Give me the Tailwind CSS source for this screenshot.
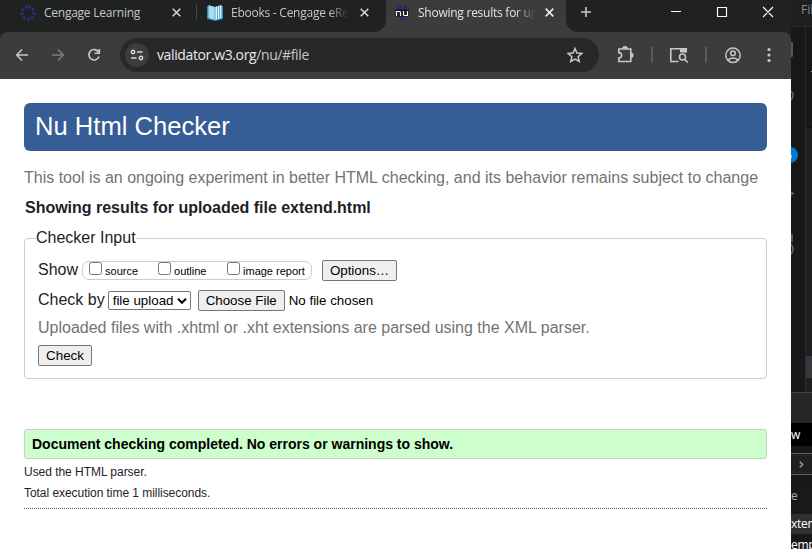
<!DOCTYPE html>
<html lang="en">
<head>
<meta charset="utf-8">
<title>Nu Html Checker</title>
<script src="https://cdn.jsdelivr.net/npm/@tailwindcss/browser@4"></script>
</head>
<body class="flex h-[549px] w-[812px] overflow-hidden bg-[#181818]">
<div class="flex w-[791px] shrink-0 flex-col bg-[#3c3c3c]">
  <header class="flex h-8 shrink-0 bg-[#1f2221] font-['Open_Sans',sans-serif] text-[12px] tracking-[-0.25px] text-[#c5c7c6]">
    <div class="flex h-[25px] w-[196px] items-center pl-[20px]">
      <svg class="h-4 w-4 shrink-0" viewBox="0 0 16 16" fill="none" stroke="#2b2d83" stroke-width="2.4"><path d="M9.500 .5L9 3.500M14 3.200l-2.500 2M15.800 9l-3-.8M13.500 14l-2-2.500M8.500 15.800v-3M3 14l2-2.300M.3 9.300l3-.8M1.500 3.800l2.700 1.700M5.500 .5l1 2.800"/></svg>
      <span class="ml-2 w-[125px] whitespace-nowrap">Cengage Learning</span>
      <svg class="ml-[3px] h-[9px] w-[9px] shrink-0" viewBox="0 0 9 9" stroke="#d6d8d7" stroke-width="1.500"><path d="M.7.7l7.600 7.600M8.300.7L.7 8.300"/></svg>
    </div>
    <div class="mt-1 h-4 w-px bg-[#484a49]"></div>
    <div class="flex h-[25px] w-[189px] items-center pl-[10px]">
      <svg class="h-4 w-4 shrink-0" viewBox="0 0 16 16"><path d="M0 1l8 1 8-1v13l-8 2-8-2z" fill="#2a8bbd"/><path d="M1.500 0L8 2v13l-6.500-2z" fill="#a9dcf2"/><path d="M8 2l6.500-2v13L8 15z" fill="#eaf6fb"/><path d="M8 2v13M10.500 1.500v12.500M12.700 1v12" stroke="#49a9d3"/></svg>
      <span class="ml-2 w-[117px] shrink-0 overflow-hidden whitespace-nowrap [mask-image:linear-gradient(to_right,black_84%,transparent)]">Ebooks - Cengage eRe</span>
      <svg class="ml-[12px] h-[9px] w-[9px] shrink-0" viewBox="0 0 9 9" stroke="#d6d8d7" stroke-width="1.500"><path d="M.7.7l7.600 7.600M8.300.7L.7 8.300"/></svg>
    </div>
    <div class="relative flex h-8 w-[180px] bg-[#3c3c3c] pb-[7px] text-[#e3e3e3]">
      <svg class="absolute bottom-0 -left-3 h-3 w-3" viewBox="0 0 12 12"><path d="M12 0v12H0A12 12 0 0012 0" fill="#3c3c3c"/></svg>
      <svg class="absolute bottom-0 -right-3 h-3 w-3" viewBox="0 0 12 12"><path d="M0 0v12h12A12 12 0 010 0" fill="#3c3c3c"/></svg>
      <div class="flex items-center pl-[8px]">
        <svg class="h-4 w-4 shrink-0" viewBox="0 0 16 16"><path d="M3 0h3l2 4 2-4h3l-1 9-3 6H7L4 9z" fill="#29296f"/><path d="M1 4.500h14v7H1z" fill="#17171f"/><path d="M2.500 11V6.500h3q1 0 1 1V11M9.500 6v3.500q0 1 1 1h3V6" fill="none" stroke="#fff" stroke-width="1.200"/></svg>
        <span class="ml-[8px] w-[117px] shrink-0 overflow-hidden whitespace-nowrap [mask-image:linear-gradient(to_right,black_84%,transparent)]">Showing results for up</span>
        <svg class="ml-[10px] h-[9px] w-[9px] shrink-0" viewBox="0 0 9 9" stroke="#e6e6e6" stroke-width="1.700"><path d="M.7.7l7.600 7.600M8.300.7L.7 8.300"/></svg>
      </div>
    </div>
    <svg class="h-6 w-[225px]" viewBox="0 0 225 24" fill="none" stroke="#fff"><path d="M15 12h10M20 7v10" stroke="#c7c7c7" stroke-width="1.600"/><path d="M105 11.500h10M151.500 7.500h9v9h-9zM197 7l10 10M207 7l-10 10" stroke-width="1.100"/></svg>
  </header>
  <div class="h-[47px] shrink-0 bg-[#1f2221]">
    <nav class="flex h-[47px] items-center rounded-t-[8px] bg-[#3c3c3c] pb-[1px] font-['Open_Sans',sans-serif]">
      <svg class="h-[34px] w-[120px]" viewBox="0 0 120 34" fill="none" stroke="#c7c7c7" stroke-width="1.600"><path d="M28 17H17M22 11.500L16.700 17l5.300 5.500"/><path d="M52 17h11M58 11.500l5.300 5.500-5.300 5.500" stroke="#7b7b7b"/><path d="M98.500 14A5.200 5.200 0 1099 18.500M99.300 11v4.200h-4.600"/></svg>
      <div class="flex h-[34px] w-[479px] items-center rounded-full bg-[#282828] pl-[5px]">
        <div class="flex h-6 w-6 items-center justify-center rounded-full bg-[#3c3c3c]"><svg class="h-4 w-4" viewBox="0 0 16 16" fill="none" stroke="#d5d5d5" stroke-width="1.500"><circle cx="4" cy="5" r="1.700"/><path d="M8 5h5.500M2 11h5.500"/><circle cx="12" cy="11" r="1.700"/></svg></div>
        <div class="ml-[8px] flex-1 text-[14px] leading-5 tracking-[-0.38px] text-[#e8eaed]">validator.w3.org<span class="text-[#c7c7c7]">/nu/#file</span></div>
        <svg class="mr-[16px] h-4 w-4" viewBox="0 0 16 16" fill="none" stroke="#c7c7c7" stroke-width="1.500"><path d="M8 1.500l1.900 4.600 4.900.4-3.700 3.200 1.100 4.800L8 12l-4.200 2.500 1.100-4.800L1.200 6.500l4.900-.4z"/></svg>
      </div>
      <svg class="h-[34px] w-[192px]" viewBox="0 0 192 34" fill="none" stroke="#c7c7c7" stroke-width="1.600"><path d="M19.800 11h12v12.500h-12V20c2 0 2.800-1 2.800-2.700s-.8-2.700-2.800-2.700z"/><path d="M24 10.500a2 1.700 0 014 0M32 15.200a1.700 2 0 010 4" fill="#c7c7c7"/><path d="M53 9v15.500M107 9v15.500" stroke="#646464" stroke-width="1.500"/><path d="M79.500 23.500h-7.700v-12.700h15.200v3.400"/><path d="M81 10h7v4.500h-7z" fill="#c7c7c7" stroke="none"/><circle cx="83.500" cy="19" r="3"/><path d="M85.800 21.500l3 3"/><circle cx="134" cy="17.300" r="7.200" stroke-width="1.500"/><circle cx="134" cy="15.300" r="2.300" stroke-width="1.500"/><path d="M129.300 22.300c1.500-3 7.900-3 9.400 0"/><g fill="#c7c7c7" stroke="none"><circle cx="170" cy="11.500" r="1.600"/><circle cx="170" cy="17" r="1.600"/><circle cx="170" cy="22.500" r="1.600"/></g></svg>
    </nav>
  </div>
  <main class="flex-1 bg-white px-6 pt-6 font-['Liberation_Sans',sans-serif] text-[16px] text-[#1f2126]">
    <h1 class="flex h-12 items-center rounded-[6px] bg-[#365d95] pb-[2px] pl-[11px] text-[25.600px] text-white">Nu Html Checker</h1>
    <p class="mt-[16px] leading-[22px] whitespace-nowrap text-[#737373]">This tool is an ongoing experiment in better HTML checking, and its behavior remains subject to change</p>
    <h2 class="mt-2 pl-px leading-[22px] font-bold tracking-[-0.02px]">Showing results for uploaded file extend.html</h2>
    <fieldset class="mt-[9px] h-[151px] rounded-[4px] border border-[#ccc] pl-[13px]">
      <legend class="-ml-[2px] h-[20px] leading-[20px]">Checker Input</legend>
      <div class="mt-[11px] flex h-[22px] items-center">
        <span>Show</span>
        <div class="ml-[4px] flex h-[19px] w-[230px] items-center rounded-[7px] border border-[#ccc] pl-[6px] text-[11px] text-black">
          <label class="flex w-[69px] items-center whitespace-nowrap"><input type="checkbox" class="mb-[4px] h-[13px] w-[13px] shrink-0"><span class="ml-[3px] pt-[2px]">source</span></label>
          <label class="flex w-[69px] items-center whitespace-nowrap"><input type="checkbox" class="mb-[4px] h-[13px] w-[13px] shrink-0"><span class="ml-[3px] pt-[2px]">outline</span></label>
          <label class="flex items-center whitespace-nowrap"><input type="checkbox" class="mb-[4px] h-[13px] w-[13px] shrink-0"><span class="ml-[3px] pt-[2px]">image report</span></label>
        </div>
        <button class="ml-[10px] h-[21px] w-[75px] rounded-[2px] border border-[#767676] bg-[#efefef] text-[13.333px] leading-[19px] text-black">Options…</button>
      </div>
      <div class="mt-[8px] flex h-[22px] items-center text-[13.333px] text-black">
        <span class="text-[16px] text-[#1f2126]">Check by</span>
        <div class="ml-[3px] flex h-[19px] w-[83px] items-center rounded-[2px] border border-[#767676] bg-white pt-px pl-[4px] whitespace-nowrap">file upload<svg class="ml-[4px] h-[6px] w-[10px]" viewBox="0 0 10 6" fill="none" stroke="#000" stroke-width="2"><path d="M1 .8l4 4 4-4"/></svg></div>
        <button class="ml-[7px] h-[21px] w-[87px] rounded-[2px] border border-[#767676] bg-[#efefef] leading-[19px]">Choose File</button>
        <span class="ml-[4px] pt-px">No file chosen</span>
      </div>
      <p class="mt-[6px] leading-[22px] text-[#737373]">Uploaded files with .xhtml or .xht extensions are parsed using the XML parser.</p>
      <button class="mt-[6px] block h-[21px] w-[54px] rounded-[2px] border border-[#767676] bg-[#efefef] text-[13.333px] leading-[19px] text-black">Check</button>
    </fieldset>
    <p class="mt-[50px] flex h-[30px] items-center rounded-[3px] border border-[#ccc] bg-[#cfc] pl-[7px] text-[14px] font-bold text-black">Document checking completed. No errors or warnings to show.</p>
    <p class="mt-[5px] text-[12px] leading-4 tracking-[-0.04px]">Used the HTML parser.</p>
    <p class="mt-[5px] text-[12px] leading-4 tracking-[-0.05px]">Total execution time 1 milliseconds.</p>
    <div class="mt-[7px] border-t border-dotted border-[#555]"></div>
  </main>
</div>
<aside class="flex w-[21px] flex-col overflow-hidden bg-[#181818] font-['Open_Sans',sans-serif] text-[12px] whitespace-nowrap text-[#ccc]">
  <div class="h-[27px] shrink-0 border-b border-[#2b2b2b] bg-[#1f1f1f] pt-px pl-[10px] text-[#8b8b8b]">Fil</div>
  <div class="flex h-[365px] shrink-0">
    <svg class="w-[14px] shrink-0" viewBox="0 0 14 365" fill="none" stroke="#686868" stroke-width="1.500"><path d="M0 16h1v13H0M0 64q4 4 0 9M0 165l2 1.500-2 1.500M1 207v8M0 217q4 5 0 10"/><circle cx="-1" cy="128" r="8" fill="#0078d4" stroke="none"/><path d="M0 128v3" stroke="#ccc"/></svg>
    <div class="flex flex-1 flex-col border-l border-[#2b2b2b] bg-[#1f1f1f]">
      <div class="h-[101px] border-b border-[#111] bg-[#181818] pt-[44px]"><div class="ml-[5px] h-px w-px bg-[#4daafc]"></div></div>
      <div class="mt-[228px] h-[22px] bg-[#37373d]"></div>
    </div>
  </div>
  <div class="h-[31px] shrink-0 border-t border-[#444] bg-[#272727]"></div>
  <div class="h-[23px] shrink-0 bg-black leading-[24px] text-white">w</div>
  <div class="mt-[7px] flex h-[22px] shrink-0 items-center border-y border-[#606060] bg-[#202020] pl-[8px]"><svg class="h-[7px] w-[5px]" viewBox="0 0 5 7" fill="none" stroke="#999" stroke-width="1.500"><path d="M.7.7l3 2.800-3 2.800"/></svg></div>
  <div class="mt-[7px] h-[32px] shrink-0 bg-[#191919] leading-[27px] text-[#aaa]">e</div>
  <div class="h-[20px] shrink-0 bg-[#303030] leading-[20px] tracking-[-0.3px] text-white">xten</div>
  <div class="flex-1 bg-[#191919] leading-[21px] tracking-[-0.3px] text-white">emp</div>
</aside>
</body>
</html>
